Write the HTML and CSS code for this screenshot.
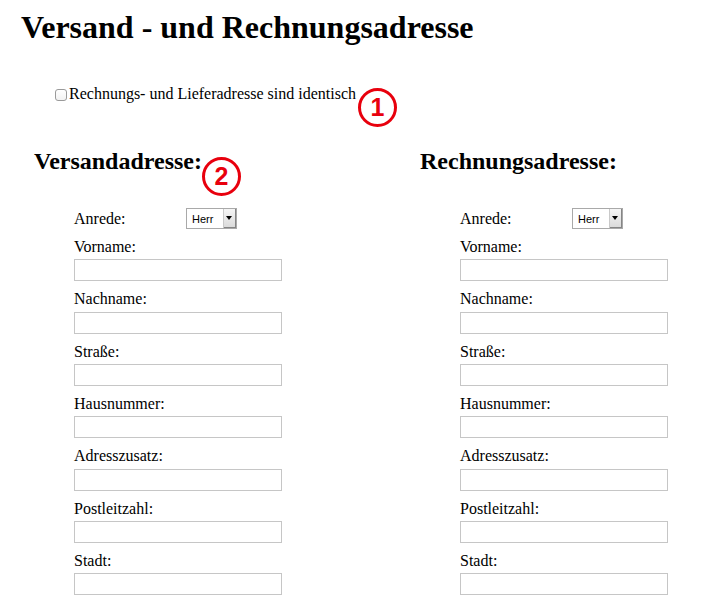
FILE: index.html
```html
<!DOCTYPE html>
<html lang="de">
<head>
<meta charset="utf-8">
<title>Versand - und Rechnungsadresse</title>
<link rel="stylesheet" href="styles.css">
</head>
<body>
<div class="page">
  <h1 class="title">Versand - und Rechnungsadresse</h1>
  <label class="same"><input type="checkbox" class="check"><span class="same-text">Rechnungs- und Lieferadresse sind identisch<span class="badge badge-1">1</span></span></label>

  <div class="columns">
    <section class="col">
      <h2 class="col-title"><span class="col-title-text">Versandadresse:<span class="badge badge-2">2</span></span></h2>
      <div class="fields">
        <div class="row-inline"><label class="inline-label">Anrede:</label><span class="select"><select><option>Herr</option><option>Frau</option></select></span></div>
        <div class="field"><label>Vorname:</label><input type="text"></div>
        <div class="field"><label>Nachname:</label><input type="text"></div>
        <div class="field"><label>Straße:</label><input type="text"></div>
        <div class="field"><label>Hausnummer:</label><input type="text"></div>
        <div class="field"><label>Adresszusatz:</label><input type="text"></div>
        <div class="field"><label>Postleitzahl:</label><input type="text"></div>
        <div class="field"><label>Stadt:</label><input type="text"></div>
      </div>
    </section>
    <section class="col">
      <h2 class="col-title"><span class="col-title-text">Rechnungsadresse:</span></h2>
      <div class="fields">
        <div class="row-inline"><label class="inline-label">Anrede:</label><span class="select"><select><option>Herr</option><option>Frau</option></select></span></div>
        <div class="field"><label>Vorname:</label><input type="text"></div>
        <div class="field"><label>Nachname:</label><input type="text"></div>
        <div class="field"><label>Straße:</label><input type="text"></div>
        <div class="field"><label>Hausnummer:</label><input type="text"></div>
        <div class="field"><label>Adresszusatz:</label><input type="text"></div>
        <div class="field"><label>Postleitzahl:</label><input type="text"></div>
        <div class="field"><label>Stadt:</label><input type="text"></div>
      </div>
    </section>
  </div>
</div>
</body>
</html>
```

FILE: styles.css
```css
html, body {
  margin: 0;
  padding: 0;
  background: #fff;
}

body {
  font-family: "Liberation Serif", "Times New Roman", serif;
  font-size: 16px;
  color: #000;
}

.page {
  padding: 9px 0 0 21px;
}

.title {
  margin: 0;
  font-size: 32px;
  line-height: 36px;
  font-weight: bold;
}

.same {
  display: block;
  margin: 40px 0 0 34px;
  line-height: 18px;
}

.check {
  -webkit-appearance: none;
  appearance: none;
  display: inline-block;
  width: 12px;
  height: 12px;
  margin: 0 2px 0 0;
  box-sizing: border-box;
  border: 1px solid #9a9a9a;
  border-radius: 3px;
  background: linear-gradient(#fff, #f2f2f2);
  vertical-align: -2px;
}

.same-text {
  position: relative;
}

.badge {
  position: absolute;
  width: 39px;
  height: 39px;
  box-sizing: border-box;
  border: 3px solid #e8000d;
  border-radius: 50%;
  color: #e8000d;
  font-family: "Liberation Sans", Arial, sans-serif;
  font-weight: bold;
  font-size: 25px;
  line-height: 1;
  display: flex;
  align-items: center;
  justify-content: center;
}

.badge-1 {
  left: calc(100% + 2px);
  top: 3px;
}

.badge-2 {
  left: 100%;
  top: 9px;
}

.columns {
  display: grid;
  grid-template-columns: 386px 1fr;
  margin: 45px 0 0 13px;
}

.col-title {
  margin: 0 0 33px 0;
  font-size: 24px;
  line-height: 27px;
  font-weight: bold;
}

.col-title-text {
  position: relative;
}

.fields {
  padding-left: 40px;
}

.row-inline {
  display: flex;
  align-items: center;
  height: 21px;
  margin-bottom: 9px;
}

.inline-label {
  width: 112px;
  line-height: 18px;
}

.select {
  position: relative;
  display: inline-block;
  width: 51px;
  height: 21px;
}

.select select {
  -webkit-appearance: none;
  appearance: none;
  display: block;
  width: 51px;
  height: 21px;
  margin: 0;
  box-sizing: border-box;
  border: 1px solid #a9a9a9;
  border-radius: 0;
  background: #fff;
  color: #000;
  font-family: "Liberation Sans", Arial, sans-serif;
  font-size: 11px;
  padding: 0 0 0 5px;
  outline: none;
}

.select::after {
  content: "";
  position: absolute;
  top: 1px;
  right: 1px;
  width: 13px;
  height: 19px;
  box-sizing: border-box;
  background: linear-gradient(#f6f6f6, #d9d9d9);
  border-left: 1px solid #c9c9c9;
  box-shadow: inset -1px -1px 0 #858585;
  pointer-events: none;
}

.select::before {
  content: "";
  position: absolute;
  z-index: 1;
  top: 8px;
  right: 5px;
  width: 0;
  height: 0;
  border-left: 3px solid transparent;
  border-right: 3px solid transparent;
  border-top: 4px solid #000;
  pointer-events: none;
}

.field {
  margin-bottom: 9px;
}

.field label {
  display: block;
  line-height: 18.33px;
  margin-bottom: 3px;
}

.field input {
  display: block;
  width: 208px;
  height: 22px;
  margin: 0;
  box-sizing: border-box;
  border: 1px solid #c6c6c6;
  border-radius: 0;
  background: #fff;
  padding: 0 3px;
  font-family: "Liberation Sans", Arial, sans-serif;
  font-size: 13px;
  outline: none;
}
```
